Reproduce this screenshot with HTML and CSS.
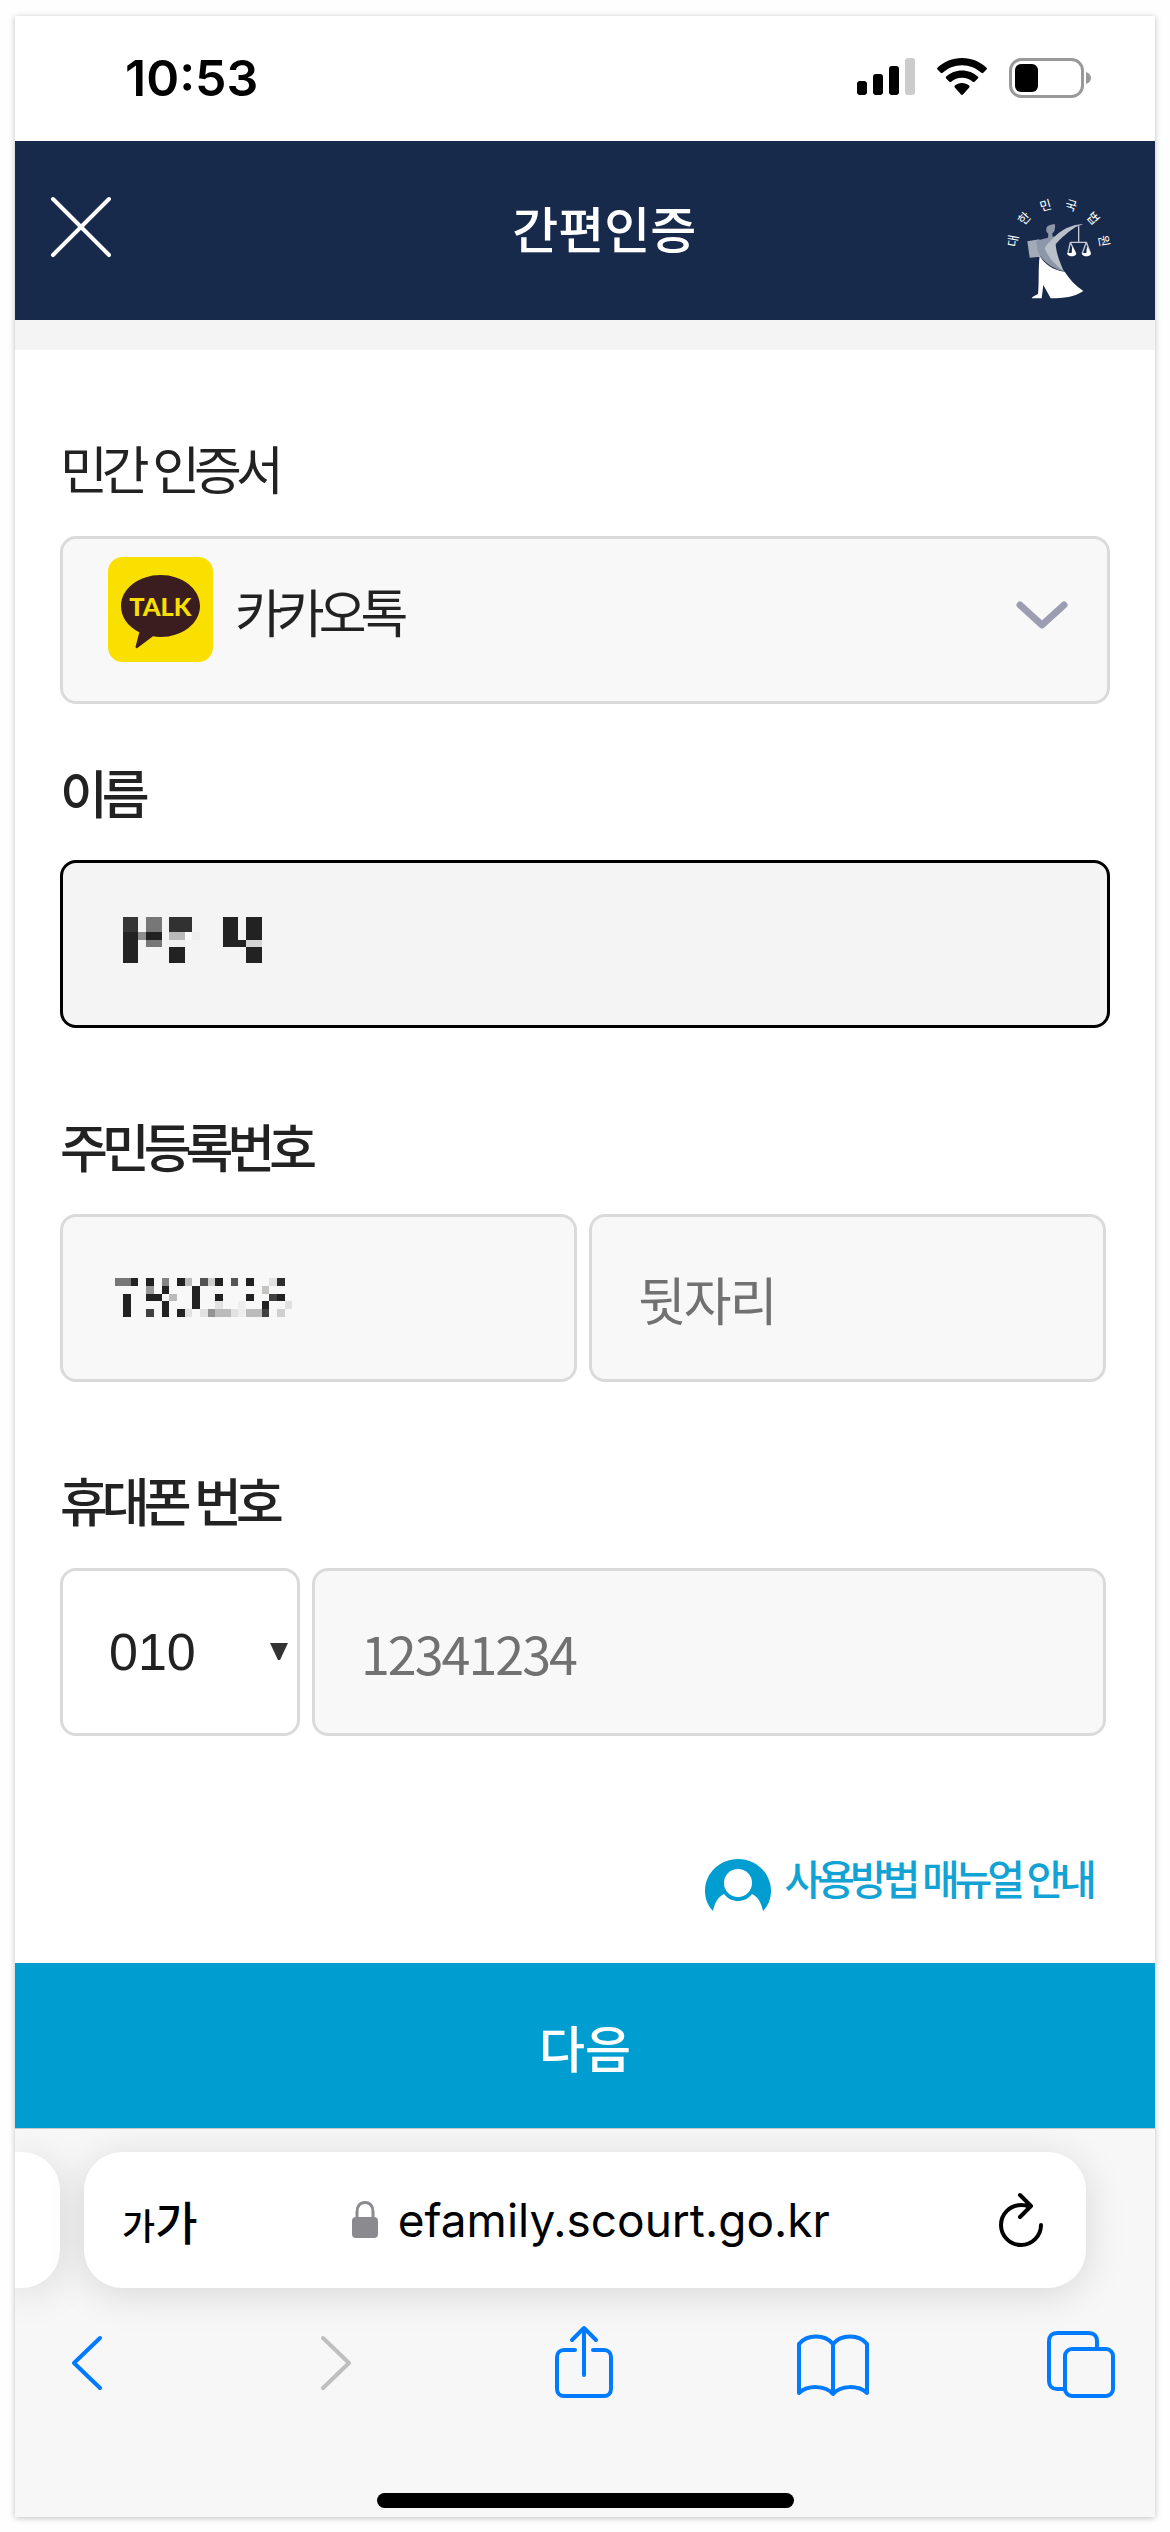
FILE: index.html
```html
<!DOCTYPE html>
<html lang="ko">

<head>
    <meta charset="UTF-8">
    <meta name="viewport" content="width=device-width, initial-scale=1.0">
    <title>간편인증</title>
    <link rel="stylesheet" href="styles.css">
</head>

<body>
    <div class="phone">
        <!-- 상태바 -->
        <div class="status">
            <span class="status-time">10:53</span>
            <div class="status-icons">
                <svg width="58" height="38" viewBox="0 0 58 38">
                    <rect x="0" y="23" width="10" height="14" rx="3" />
                    <rect x="16" y="16" width="10" height="21" rx="3" />
                    <rect x="32" y="8" width="10" height="29" rx="3" />
                    <rect x="48" y="0" width="10" height="37" rx="3" fill="#ccc" />
                </svg>
                <svg width="50" height="38" viewBox="0 0 50 38">
                    <path d="M25 0C15.500 0 6.800 3.700.500 9.700c-.6.500-.6 1.300 0 1.900l3.200 3.200c.5.500 1.300.5 1.900 0C10.700 10 17.500 7.200 25 7.200S39.300 10 44.400 14.800c.6.500 1.400.5 1.900 0l3.200-3.200c.6-.6.6-1.400 0-1.900C43.200 3.700 34.500 0 25 0z" />
                    <path d="M25 12.500c-6.100 0-11.600 2.300-15.800 6.100-.6.500-.6 1.400 0 1.900l3.200 3.200c.5.500 1.300.5 1.900 0 2.900-2.500 6.600-4 10.700-4s7.800 1.500 10.700 4c.6.500 1.400.5 1.900 0l3.200-3.200c.6-.5.6-1.400 0-1.900C36.600 14.800 31.100 12.500 25 12.500z" />
                    <path d="M25 25c-2.700 0-5.200 1-7.100 2.600-.6.500-.6 1.400-.1 1.900l6.200 7.100c.6.600 1.400.6 2 0l6.200-7.100c.5-.5.5-1.400-.1-1.900C30.200 26 27.700 25 25 25z" />
                </svg>
                <svg width="82" height="40" viewBox="0 0 82 40">
                    <rect x="1.500" y="1.500" width="72" height="37" rx="11" fill="none" stroke="#999" stroke-width="3" />
                    <rect x="6" y="6" width="23" height="28" rx="6" />
                    <path d="M77 14c3 1 5 3 5 6s-2 5-5 6z" fill="#999" />
                </svg>
            </div>
        </div>

        <!-- 헤더 -->
        <header class="header">
            <button type="button" class="header-close" aria-label="닫기">
                <svg width="62" height="62" viewBox="0 0 62 62">
                    <path d="M3 3l56 56M59 3L3 59" fill="none" stroke="#fff" stroke-width="4" stroke-linecap="round" />
                </svg>
            </button>
            <h1 class="header-title">간편인증</h1>
            <svg class="header-logo" width="130" height="120" viewBox="96 80 390 360">
                <g class="logo-text">
                    <text transform="translate(153 247) rotate(-80)">대</text>
                    <text transform="translate(188 178) rotate(-48)">한</text>
                    <text transform="translate(253 139) rotate(-16)">민</text>
                    <text transform="translate(331 139) rotate(16)">국</text>
                    <text transform="translate(398 178) rotate(48)">법</text>
                    <text transform="translate(432 247) rotate(80)">원</text>
                </g>
                <path d="M199 249l36-6 3 52-32 3z" fill="#a3abb9" />
                <path d="M256 212c0-9 12-14 26-14 1 14-2 24-8 27l1 16-14-1 1-14c-5-3-7-8-6-14z" fill="#8d97a9" />
                <path d="M226 247c12-3 22-6 34-9l22-4c-9 12-24 24-22 36 6 26 30 50 50 69-26-4-58-24-72-46-8-12-12-30-12-46z" fill="#8d97a9" />
                <path d="M367 198c-24 0-48 8-66 21-18 12-38 32-50 51 8 24 32 50 57 68-10-24-22-50-24-80 14-18 44-42 60-52z" fill="#b9c0ca" />
                <path d="M236 292c14 24 40 44 75 48 14 22 32 42 56 58-26 18-60 22-98 22l-22-40-5 40h-30c2-6 12-8 19-13 4-36 0-76 5-115z" fill="#fff" />
                <path d="M353 204v46M328 252h50M328 252l-7 32M328 252l15 32M376 252l-12 32M376 252l12 32" fill="none" stroke="#c5cad3" stroke-width="4" />
                <path d="M318 284h14l2-20 12 22c-2 10-26 12-28-2zM362 284h14l2-20 12 22c-2 10-26 12-28-2z" fill="#fff" />
            </svg>
        </header>

        <!-- 인증 정보 입력 -->
        <form class="form">
            <div class="group">
                <label class="label label-light" for="cert">민간 인증서</label>
                <div class="field">
                    <select id="cert" class="box cert-select">
                        <option>카카오톡</option>
                    </select>
                    <svg class="cert-icon" width="105" height="105" viewBox="24 36 315 315">
                        <rect x="24" y="36" width="315" height="315" rx="44" fill="#f9e000" />
                        <path d="M182 90c65 0 118 41 118 93s-53 93-118 93c-8 0-16-1-23-2l-46 34c-4 3-7 1-6-4l11-42c-34-17-55-46-55-79 0-52 54-93 119-93z" fill="#3b1c1f" />
                        <text class="cert-talk" x="181" y="213">TALK</text>
                    </svg>
                    <svg class="cert-arrow" width="52" height="30" viewBox="0 0 52 30">
                        <path d="M4 4l22 20L48 4" fill="none" stroke="#9c9db2" stroke-width="7" stroke-linecap="round" stroke-linejoin="round" />
                    </svg>
                </div>
            </div>

            <div class="group">
                <label class="label" for="username">이름</label>
                <div class="field">
                    <input type="text" id="username" class="box box-active">
                    <!-- 모자이크 처리된 이름 -->
                    <svg class="mosaic mosaic-name" width="220" height="100" viewBox="0 0 660 300" shape-rendering="crispEdges">
                        <g fill="#222">
                            <rect x="99" y="126" width="45" height="93" />
                            <rect x="168" y="126" width="48" height="24" />
                            <rect x="237" y="171" width="48" height="48" />
                            <rect x="399" y="81" width="45" height="90" />
                            <rect x="444" y="150" width="24" height="21" />
                            <rect x="468" y="81" width="48" height="69" />
                            <rect x="468" y="171" width="48" height="48" />
                        </g>
                        <rect x="99" y="81" width="45" height="45" fill="#363636" />
                        <rect x="144" y="126" width="24" height="24" fill="#8f8f8f" />
                        <rect x="168" y="81" width="48" height="45" fill="#777" />
                        <rect x="168" y="150" width="48" height="21" fill="#777" />
                        <rect x="237" y="81" width="69" height="45" fill="#313131" />
                        <rect x="237" y="126" width="48" height="24" fill="#b9b9b9" />
                        <rect x="285" y="126" width="21" height="24" fill="#f9f9f9" />
                        <rect x="306" y="126" width="24" height="24" fill="#eee" />
                        <rect x="237" y="150" width="48" height="21" fill="#f0f0f0" />
                        <rect x="468" y="150" width="48" height="21" fill="#d5d5d3" />
                    </svg>
                </div>
            </div>

            <div class="group group-gap">
                <label class="label" for="regno1">주민등록번호</label>
                <div class="row">
                    <div class="field">
                        <input type="text" id="regno1" class="box">
                        <!-- 모자이크 처리된 앞자리 -->
                        <svg class="mosaic mosaic-regno" width="220" height="100" viewBox="0 0 660 300" shape-rendering="crispEdges">
                            <g fill="#222">
                                <rect x="93" y="84" width="21" height="24" />
                                <rect x="69" y="132" width="24" height="69" />
                                <rect x="138" y="84" width="24" height="24" />
                                <rect x="138" y="132" width="48" height="21" />
                                <rect x="186" y="108" width="21" height="24" />
                                <rect x="186" y="153" width="21" height="48" />
                                <rect x="231" y="84" width="24" height="24" />
                                <rect x="231" y="177" width="24" height="24" />
                                <rect x="276" y="108" width="24" height="69" />
                                <rect x="345" y="84" width="24" height="24" />
                                <rect x="345" y="132" width="24" height="21" />
                                <rect x="438" y="84" width="24" height="24" />
                                <rect x="438" y="132" width="24" height="21" />
                                <rect x="486" y="153" width="21" height="24" />
                                <rect x="531" y="132" width="24" height="21" />
                            </g>
                            <g fill="#404040">
                                <rect x="138" y="177" width="24" height="24" />
                                <rect x="486" y="177" width="21" height="24" />
                                <rect x="507" y="132" width="24" height="21" />
                                <rect x="531" y="84" width="24" height="24" fill="#2d2d2d" />
                                <rect x="300" y="84" width="24" height="24" fill="#525252" />
                                <rect x="393" y="84" width="21" height="24" fill="#555" />
                                <rect x="45" y="84" width="48" height="24" fill="#777" />
                                <rect x="186" y="84" width="21" height="24" fill="#858585" />
                            </g>
                            <g fill="#bbb">
                                <rect x="138" y="108" width="24" height="24" fill="#999" />
                                <rect x="324" y="177" width="21" height="24" fill="#939393" />
                                <rect x="345" y="177" width="48" height="24" />
                                <rect x="438" y="177" width="48" height="24" />
                                <rect x="207" y="132" width="24" height="21" />
                                <rect x="255" y="84" width="21" height="24" />
                                <rect x="486" y="108" width="21" height="24" fill="#c3c3c1" />
                                <rect x="324" y="84" width="21" height="24" fill="#cececc" />
                                <rect x="531" y="177" width="24" height="24" fill="#cfcfcd" />
                            </g>
                            <g fill="#e1e1e1">
                                <rect x="255" y="177" width="21" height="24" />
                                <rect x="300" y="177" width="24" height="24" />
                                <rect x="345" y="153" width="24" height="24" />
                                <rect x="393" y="177" width="21" height="24" />
                                <rect x="507" y="84" width="24" height="24" />
                                <rect x="555" y="153" width="21" height="24" />
                                <rect x="414" y="153" width="24" height="48" fill="#eee" />
                            </g>
                        </svg>
                    </div>
                    <div class="field">
                        <input type="text" id="regno2" class="box" placeholder="뒷자리" aria-label="주민등록번호 뒷자리">
                    </div>
                </div>
            </div>

            <div class="group group-gap">
                <label class="label" for="phone">휴대폰 번호</label>
                <div class="row">
                    <div class="field field-prefix">
                        <select id="prefix" class="box prefix-select" aria-label="휴대폰 앞자리">
                            <option>010</option>
                        </select>
                        <svg class="prefix-arrow" width="18" height="18" viewBox="0 0 18 18">
                            <path d="M0 0h18L10 17H8z" fill="#333" />
                        </svg>
                    </div>
                    <div class="field">
                        <input type="text" id="phone" class="box" placeholder="12341234">
                    </div>
                </div>
            </div>

            <a class="guide" href="#">
                <svg width="66" height="56" viewBox="0 0 66 56">
                    <path d="M33 0C15 0 0 14 0 32c0 8 3 15 8 20 2-9 5-14 11-17 4 5 9 7 14 7s10-2 14-7c6 3 9 8 11 17 5-5 8-12 8-20C66 14 51 0 33 0z" fill="#009dd0" />
                    <circle cx="33" cy="24" r="14" fill="#fff" />
                </svg>
                <span>사용방법 매뉴얼 안내</span>
            </a>
        </form>
        <button type="button" class="next">다음</button>

        <!-- 브라우저 하단 -->
        <div class="browser">
            <div class="tabs">
                <div class="tab-prev"></div>
                <div class="address">
                    <button type="button" class="text-size" aria-label="글자 크기"><small>가</small>가</button>
                    <div class="url">
                        <svg width="26" height="38" viewBox="0 0 26 38">
                            <path d="M5 17v-6c0-6 3-9.500 8-9.500s8 3.500 8 9.500v6" fill="none" stroke="#8a8a8f" stroke-width="3" />
                            <rect x="0" y="16" width="26" height="21" rx="4" fill="#8a8a8f" />
                        </svg>
                        <span>efamily.scourt.go.kr</span>
                    </div>
                    <button type="button" class="reload" aria-label="새로고침">
                        <svg width="46" height="56" viewBox="0 0 46 56">
                            <path d="M31 14.500c-2.500-1-5-1.500-8-1.500C12 13 3 22 3 33s9 20 20 20 20-9 20-20M22 3l11 11-11 11" fill="none" stroke="#000" stroke-width="4" stroke-linecap="round" stroke-linejoin="round" />
                        </svg>
                    </button>
                </div>
            </div>
            <nav class="toolbar">
                <button type="button" aria-label="뒤로">
                    <svg width="32" height="74" viewBox="0 0 32 74">
                        <path d="M29 13L3 38l26 25" />
                    </svg>
                </button>
                <button type="button" aria-label="앞으로" disabled>
                    <svg width="32" height="74" viewBox="0 0 32 74">
                        <path d="M3 13l26 25L3 63" />
                    </svg>
                </button>
                <button type="button" aria-label="공유">
                    <svg width="58" height="74" viewBox="0 0 58 74">
                        <path d="M20 25H9c-4 0-7 3-7 7v32c0 4 3 7 7 7h40c4 0 7-3 7-7V32c0-4-3-7-7-7H38M29 50V3M17 15L29 3l12 12" />
                    </svg>
                </button>
                <button type="button" aria-label="책갈피">
                    <svg width="72" height="74" viewBox="0 0 72 74">
                        <path d="M36 19C28 9 10 9 2 19v49c9-8 26-8 34 1 8-9 25-9 34-1V19C62 9 44 9 36 19zM36 19v50" />
                    </svg>
                </button>
                <button type="button" aria-label="탭">
                    <svg width="68" height="74" viewBox="0 0 68 74">
                        <path d="M50 23v-7c0-5-3-8-8-8H10c-5 0-8 3-8 8v40c0 5 3 8 8 8h8" />
                        <rect x="18" y="24" width="48" height="47" rx="7" />
                    </svg>
                </button>
            </nav>
            <div class="home-bar"></div>
        </div>
    </div>
</body>

</html>
```
FILE: styles.css
```css
* {
    box-sizing: border-box;
}

body {
    margin: 0;
    padding: 16px 15px;
    background: #fefefe;
    color: #222;
    font-family: "Noto Sans CJK KR", sans-serif;
}

button {
    padding: 0;
    border: 0;
    background: none;
    font-family: inherit;
}

svg {
    display: block;
}

.phone {
    background: #fff;
    box-shadow: 0 1px 6px rgba(0, 0, 0, .25);
}

/* 상태바 */
.status {
    display: flex;
    justify-content: space-between;
    align-items: center;
    height: 125px;
    padding: 0 64px 2px 110px;
}

.status-time {
    color: #000;
    font-family: Inter, sans-serif;
    font-size: 50px;
    font-weight: 600;
}

.status-icons {
    display: flex;
    gap: 22px;
}

/* 헤더 */
.header {
    display: grid;
    grid-template-columns: 13fr auto 12fr;
    align-items: center;
    height: 179px;
    padding: 0 32px 8px 35px;
    background: #182a4b;
}

.header-close {
    justify-self: start;
}

.header-title {
    margin: 0;
    color: #fff;
    font-size: 50px;
    font-weight: 500;
}

.header-logo {
    justify-self: end;
    margin-top: 36px;
}

.logo-text {
    fill: #fff;
    font-size: 38px;
    text-anchor: middle;
    dominant-baseline: central;
}

/* 입력 폼 */
.form {
    padding: 85px 45px 48px;
    border-top: 30px solid #f4f4f4;
}

.group {
    margin-bottom: 55px;
}

.group-gap {
    margin-top: 85px;
}

.label {
    display: block;
    margin-bottom: 35px;
    font-size: 52px;
    font-weight: 500;
    line-height: 66px;
    letter-spacing: -6px;
}

.label-light {
    font-weight: 400;
}

.row {
    display: flex;
    gap: 12px;
    padding-right: 4px;
}

.field {
    position: relative;
    flex: 1;
}

.field-prefix {
    flex: 0 0 240px;
}

.box {
    display: block;
    width: 100%;
    height: 168px;
    padding: 0 46px;
    border: 3px solid #dadada;
    border-radius: 16px;
    outline: none;
    background: #f8f8f8;
    color: #222;
    font-family: inherit;
    font-size: 52px;
    letter-spacing: -2px;
    appearance: none;
}

.box::placeholder {
    color: #717171;
    opacity: 1;
}

.box-active {
    border-color: #000;
    background: #f4f4f4;
}

.cert-select {
    padding: 0 120px 20px 172px;
    letter-spacing: -6px;
}

.cert-icon {
    position: absolute;
    top: 21px;
    left: 48px;
    pointer-events: none;
}

.cert-talk {
    fill: #f9e000;
    font-family: Lato, sans-serif;
    font-size: 76px;
    font-weight: 900;
    text-anchor: middle;
}

.cert-arrow {
    position: absolute;
    top: 65px;
    right: 42px;
    pointer-events: none;
}

.prefix-select {
    background: #fff;
    font-family: "Liberation Sans", sans-serif;
    letter-spacing: 0;
}

.prefix-arrow {
    position: absolute;
    top: 75px;
    right: 12px;
    pointer-events: none;
}

.mosaic {
    position: absolute;
    pointer-events: none;
}

.mosaic-name {
    top: 30px;
    left: 30px;
}

.mosaic-regno {
    top: 36px;
    left: 40px;
}

.guide {
    display: flex;
    justify-content: flex-end;
    gap: 14px;
    margin-top: 123px;
    padding-right: 18px;
    color: #12a2d3;
    font-size: 41px;
    font-weight: 500;
    line-height: 36px;
    letter-spacing: -5px;
    text-decoration: none;
}

.next {
    display: block;
    width: 100%;
    height: 165px;
    background: #009dd0;
    color: #fff;
    font-size: 50px;
    font-weight: 500;
}

/* 브라우저 하단 */
.browser {
    overflow: hidden;
    padding-bottom: 9px;
    border-top: 1px solid #c8c8c8;
    background: #f7f7f7;
}

.tabs {
    display: flex;
    gap: 24px;
    padding: 23px 69px 0 0;
}

.tab-prev,
.address {
    height: 136px;
    background: #fff;
    box-shadow: 0 6px 40px rgba(0, 0, 0, .13);
}

.tab-prev {
    width: 45px;
    border-radius: 0 38px 38px 0;
}

.address {
    display: flex;
    flex: 1;
    justify-content: space-between;
    align-items: center;
    padding: 0 42px 0 38px;
    border-radius: 38px;
}

.text-size {
    color: #000;
    font-size: 46px;
    font-weight: 500;
}

.text-size small {
    font-size: 36px;
}

.url {
    display: flex;
    align-items: center;
    gap: 20px;
    color: #000;
    font-family: Inter, sans-serif;
    font-size: 46px;
}

.reload {
    padding-left: 14px;
}

.toolbar {
    display: flex;
    justify-content: space-between;
    padding: 37px 38px 0 36px;
}

.toolbar button {
    width: 72px;
}

.toolbar svg {
    margin: 0 auto;
    fill: none;
    stroke: #007aff;
    stroke-width: 4;
    stroke-linecap: round;
    stroke-linejoin: round;
}

.toolbar button:disabled svg {
    stroke: #bfbfbf;
}

.home-bar {
    width: 417px;
    height: 15px;
    margin: 94px auto 0;
    border-radius: 8px;
    background: #000;
}
```
